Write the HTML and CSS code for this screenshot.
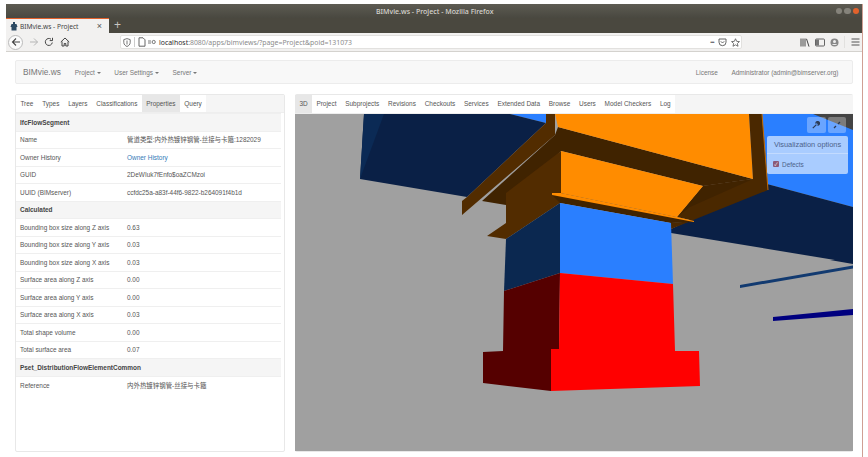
FILE: index.html
```html
<!DOCTYPE html>
<html lang="en">
<head>
    <meta charset="UTF-8">
    <title>BIMvie.ws - Project</title>
    <link rel="stylesheet" href="styles.css">
</head>
<body>
<div class="window">
    <div class="titlebar">
        <span class="title">BIMvie.ws - Project - Mozilla Firefox</span>
        <div class="winbtns"><i></i><i></i><i class="close"></i></div>
    </div>
    <div class="tabstrip">
        <div class="tab">
            <svg class="favicon" width="8" height="9" viewBox="0 0 8 9"><path d="M3 0h2v2h1.500l1 3h-1v3.500H1.500V5h-1l1-3H3z" fill="#2c4a63"/></svg>
            <span class="tab-title">BIMvie.ws - Project</span>
            <span class="tab-close">×</span>
        </div>
        <span class="newtab">+</span>
    </div>
    <div class="toolbar">
        <div class="back">
            <svg width="10" height="10" viewBox="0 0 10 10"><path d="M9 5H1.500M5 1.500L1.500 5 5 8.500" fill="none" stroke="#444" stroke-width="1.100"/></svg>
        </div>
        <svg class="tool forward" width="10" height="10" viewBox="0 0 10 10"><path d="M1 5h7.500M5 1.500L8.500 5 5 8.500" fill="none" stroke="#b5b5b5" stroke-width="1"/></svg>
        <svg class="tool reload" width="10" height="10" viewBox="0 0 10 10"><path d="M8.300 5.500A3.500 3.500 0 1 1 7 2.200M8.500 .8v2.800H5.700" fill="none" stroke="#444" stroke-width="1"/></svg>
        <svg class="tool home" width="10" height="10" viewBox="0 0 10 10"><path d="M.8 5L5 1l4.200 4M2 4.500V9h2.200V6.500h1.600V9H8V4.500" fill="none" stroke="#444" stroke-width="1"/></svg>
        <div class="urlbar">
            <svg width="8" height="9" viewBox="0 0 8 9"><path d="M4 .6l3.200 1v3C7.200 6.500 5.500 7.900 4 8.500 2.500 7.900.8 6.500.8 4.600v-3zM4 2.500v4" fill="none" stroke="#666" stroke-width=".9"/></svg>
            <span class="url-sep"></span>
            <svg width="8" height="10" viewBox="0 0 8 10"><path d="M1 .8h4l2 2v6.400H1z" fill="none" stroke="#555" stroke-width=".9"/></svg>
            <svg class="url-conn" width="8" height="6" viewBox="0 0 8 6"><path d="M0 2h3M0 4h3" stroke="#555" stroke-width=".8"/><circle cx="5.700" cy="3" r="1.600" fill="none" stroke="#555" stroke-width=".8"/></svg>
            <span class="url"><b>localhost</b>:8080/apps/bimviews/?page=Project&amp;poid=131073</span>
            <span class="url-dots">•••</span>
            <svg width="9" height="9" viewBox="0 0 9 9"><path d="M1 1h7v3.200a3.500 3.500 0 0 1-7 0zM2.800 3.300L4.500 5l1.700-1.700" fill="none" stroke="#555" stroke-width=".9"/></svg>
            <svg width="9" height="9" viewBox="0 0 10 10"><path d="M5 .8l1.300 2.900 3.100.3-2.300 2.100.7 3.100L5 7.600 2.200 9.200l.7-3.100L.6 4l3.100-.3z" fill="none" stroke="#555" stroke-width=".9"/></svg>
        </div>
        <div class="tool-right">
            <svg width="10" height="9" viewBox="0 0 10 9"><path d="M1 .5v8M3 .5v8M5 .5v8M6.500 .8l2.500 7.800" fill="none" stroke="#444" stroke-width="1"/></svg>
            <svg width="10" height="9" viewBox="0 0 10 9"><rect x=".5" y="1" width="9" height="7" rx="1" fill="none" stroke="#555" stroke-width=".9"/><rect x="1" y="1.500" width="3" height="6" fill="#777"/></svg>
            <svg width="9" height="9" viewBox="0 0 9 9"><circle cx="4.500" cy="4.500" r="4" fill="#888"/><circle cx="4.500" cy="3.400" r="1.500" fill="#eee"/><path d="M2 7c.6-1.400 4.400-1.400 5 0z" fill="#eee"/></svg>
            <span class="tool-sep"></span>
            <svg width="9" height="8" viewBox="0 0 9 8"><path d="M.5 1h8M.5 4h8M.5 7h8" stroke="#555" stroke-width="1"/></svg>
        </div>
    </div>

    <div class="page">
        <nav class="navbar">
            <span class="brand">BIMvie.ws</span>
            <a class="nav-item">Project<i class="caret"></i></a>
            <a class="nav-item">User Settings<i class="caret"></i></a>
            <a class="nav-item">Server<i class="caret"></i></a>
            <a class="nav-item license">License</a>
            <a class="nav-item">Administrator (admin@bimserver.org)</a>
        </nav>

        <div class="columns">
            <section class="panel left">
                <ul class="tabs">
                    <li>Tree</li>
                    <li>Types</li>
                    <li>Layers</li>
                    <li>Classifications</li>
                    <li class="active">Properties</li>
                    <li>Query</li>
                </ul>
                <table class="props">
                    <colgroup><col class="col-name"><col></colgroup>
                    <tr class="group"><td colspan="2">IfcFlowSegment</td></tr>
                    <tr><td>Name</td><td>管道类型:内外热镀锌钢管-丝接与卡箍:1282029</td></tr>
                    <tr><td>Owner History</td><td><a>Owner History</a></td></tr>
                    <tr><td>GUID</td><td>2DeWIuk7fEnfo$oaZCMzoi</td></tr>
                    <tr><td>UUID (BIMserver)</td><td>ccfdc25a-a83f-44f6-9822-b264091f4b1d</td></tr>
                    <tr class="group"><td colspan="2">Calculated</td></tr>
                    <tr><td>Bounding box size along Z axis</td><td>0.63</td></tr>
                    <tr><td>Bounding box size along Y axis</td><td>0.03</td></tr>
                    <tr><td>Bounding box size along X axis</td><td>0.03</td></tr>
                    <tr><td>Surface area along Z axis</td><td>0.00</td></tr>
                    <tr><td>Surface area along Y axis</td><td>0.00</td></tr>
                    <tr><td>Surface area along X axis</td><td>0.03</td></tr>
                    <tr><td>Total shape volume</td><td>0.00</td></tr>
                    <tr><td>Total surface area</td><td>0.07</td></tr>
                    <tr class="group"><td colspan="2">Pset_DistributionFlowElementCommon</td></tr>
                    <tr><td>Reference</td><td>内外热镀锌钢管-丝接与卡箍</td></tr>
                </table>
            </section>

            <section class="panel right">
                <ul class="tabs">
                    <li class="active">3D</li>
                    <li>Project</li>
                    <li>Subprojects</li>
                    <li>Revisions</li>
                    <li>Checkouts</li>
                    <li>Services</li>
                    <li>Extended Data</li>
                    <li>Browse</li>
                    <li>Users</li>
                    <li>Model Checkers</li>
                    <li>Log</li>
                </ul>
                <div class="viewer">
                    <svg class="scene" viewBox="295 114 558 337" width="558" height="337">
                        <rect x="295" y="114" width="558" height="337" fill="#a0a0a0"/>
                        <polygon points="510,114 546,114 546,123" fill="#2a7fff"/>
                        <polygon points="364,114 510,114 546,123 467,197 360,179" fill="#0a2046"/>
                        <polygon points="364,114 384,114 360,179" fill="#0b2a55"/>
                        <polygon points="762,114 853,114 853,207 767,184" fill="#2a7fff"/>
                        <polygon points="813,114 853,114 853,130" fill="#444"/>
                        <polygon points="671,229 767,184 853,207 853,263 671,233" fill="#0a2046"/>
                        <polygon points="830,260 853,260 853,264" fill="#0a2046"/>
                        <polygon points="740,285 853,265.500 853,268.500 740,288" fill="#123a70"/>
                        <polygon points="773,317 853,309 853,315 773,321" fill="#00007f"/>
                        <polygon points="482,201 555,135 558,127 753,179 703,186 561,151 506,205" fill="#402300"/>
                        <polygon points="546,114 555,114 555,135 462,215 462,201 467,197 546,123" fill="#522c00"/>
                        <polygon points="555,114 749,114 753,179 558,127" fill="#ff8c00"/>
                        <polygon points="749,114 762,114 768,190 671,229 671,223 694,221 677,217 703,186 753,179" fill="#4a2800"/>
                        <polygon points="703,186 753,179 690,207 677,217" fill="#402300"/>
                        <line x1="762" y1="114" x2="768" y2="190" stroke="#c26a00" stroke-width="1"/>
                        <polygon points="506,193 561,151 561,195 560,203 506,239 487,236 506,223" fill="#522c00"/>
                        <polygon points="552,195 561,193 677,217 694,222 671,223 560,203" fill="#402300"/>
                        <polygon points="561,151 703,186 677,217 561,193" fill="#ff8c00"/>
                        <polygon points="552,193 561,193 677,217 694,221 694,222 552,195" fill="#ff8c00"/>
                        <polygon points="560,203 671,223 673,284 560,273" fill="#2a7fff"/>
                        <polygon points="560,203 506,239 504,291 560,273" fill="#0b2850"/>
                        <polygon points="560,273 504,291 503,351 483,352 483,383 551,391 551,349 559,349" fill="#550000"/>
                        <polygon points="560,273 673,284 675,351 699,351 700,386 551,391 551,349 559,349" fill="#ff0000"/>
                    </svg>
                    <div class="viewer-btns">
                        <span class="vbtn">
                            <svg width="8" height="8" viewBox="0 0 8 8"><path d="M.8 7.200l3.600-3.600M4 2.600a1.700 1.700 0 0 1 2.600-1.800L5.400 2l.6.600 1.200-1.200A1.700 1.700 0 0 1 5.400 4" fill="none" stroke="#2b3a55" stroke-width="1.200"/></svg>
                        </span>
                        <span class="vbtn">
                            <svg width="8" height="8" viewBox="0 0 8 8"><path d="M1 7l2-2M5 3l2-2" stroke="#2b3a55" stroke-width="1.300"/></svg>
                        </span>
                    </div>
                    <div class="vis-options">
                        <div class="vis-title">Visualization options</div>
                        <div class="vis-body"><span class="check">✓</span>Defects</div>
                    </div>
                </div>
            </section>
        </div>
    </div>
</div>
</body>
</html>
```

FILE: styles.css
```css
* {
    margin: 0;
    padding: 0;
    box-sizing: border-box;
}

html, body {
    height: 100%;
    overflow: hidden;
}

body {
    background-color: #fff;
    font-family: "Liberation Sans", Arial, "Noto Sans CJK SC", sans-serif;
    font-size: 6.45px;
    color: #333;
}

svg {
    display: block;
    flex: none;
}

.window {
    margin: 4px 0 0 6px;
    width: 857px;
    height: 453px;
    border-right: 1px solid #cf9f94;
}

/* firefox chrome */
.titlebar {
    height: 14px;
    padding-right: 3px;
    display: flex;
    align-items: center;
    justify-content: flex-end;
    position: relative;
    background: linear-gradient(#5d5b52, #494840);
}

.title {
    position: absolute;
    left: 370px;
    top: 3px;
    font-family: "Noto Sans", sans-serif;
    font-size: 7px;
    line-height: 9px;
    font-weight: 500;
    color: #d8d6d0;
}

.winbtns {
    display: flex;
    gap: 2px;
}

.winbtns i {
    width: 6.500px;
    height: 6.500px;
    border-radius: 50%;
    background-color: #85837b;
}

.winbtns .close {
    background-color: #e2622c;
}

.tabstrip {
    height: 15px;
    display: flex;
    background-color: #4a483f;
}

.tab {
    width: 103px;
    display: flex;
    align-items: center;
    padding: 0 7px 0 4px;
    background-color: #f2f1f0;
    border-top: 1px solid #e2622c;
}

.favicon {
    margin-right: 2px;
}

.tab-title {
    flex: 1;
    font-family: "Noto Sans", sans-serif;
    font-size: 6.600px;
    color: #444;
}

.tab-close {
    font-size: 9px;
    color: #555;
}

.newtab {
    margin-left: 1px;
    padding: 0 4px;
    font-size: 12px;
    line-height: 14px;
    color: #c8c6c0;
}

.toolbar {
    height: 19px;
    display: flex;
    align-items: center;
    padding-left: 2px;
    background-color: #f2f1f0;
    border-bottom: 1px solid #d4d2ce;
}

.back {
    width: 15px;
    height: 15px;
    display: flex;
    align-items: center;
    justify-content: center;
    background-color: #fbfbfb;
    border: 1px solid #bbb;
    border-radius: 50%;
}

.forward {
    margin-left: 6px;
}

.reload {
    margin-left: 5px;
}

.home {
    margin-left: 6px;
}

.urlbar {
    width: 622px;
    height: 14px;
    margin-left: 50px;
    display: flex;
    align-items: center;
    padding: 0 1px 0 2px;
    background-color: #fff;
    border: 1px solid #e2e1df;
    border-radius: 2px;
}

.url-sep {
    width: 1px;
    height: 10px;
    margin: 0 3px;
    background-color: #ccc;
}

.url-conn {
    margin-left: 2px;
}

.url {
    flex: 1;
    margin-left: 3px;
    font-family: "Noto Sans", sans-serif;
    font-size: 6.900px;
    color: #8b8b8b;
}

.url b {
    font-weight: 400;
    color: #2a2a2a;
}

.url-dots {
    margin-right: 4px;
    font-size: 5px;
    letter-spacing: -.5px;
    color: #555;
}

.urlbar .url-dots + svg {
    margin-right: 4px;
}

.tool-right {
    display: flex;
    align-items: center;
    gap: 5px;
    margin-left: 58px;
}

.tool-sep {
    width: 1px;
    height: 12px;
    margin: 0 1px 0 0;
    background-color: #e2e1df;
}

/* page */
.page {
    padding: 8px 9px 0;
}

.navbar {
    height: 24px;
    display: flex;
    align-items: center;
    padding-left: 7px;
    background-color: #f8f8f8;
    border: 1px solid #ececec;
    border-radius: 2px;
}

.brand {
    margin-right: 14px;
    font-size: 8.300px;
    color: #777;
}

.nav-item {
    margin-right: 13.500px;
    color: #777;
}

.license {
    margin-left: auto;
}

.caret {
    display: inline-block;
    margin-left: 2px;
    vertical-align: middle;
    border-top: 2px solid #777;
    border-left: 2px solid transparent;
    border-right: 2px solid transparent;
}

.columns {
    display: flex;
    gap: 10px;
    margin-top: 10px;
}

.panel {
    height: 358px;
    background-color: #fff;
    border: 1px solid #e8e8e8;
    border-radius: 2px;
}

.left {
    width: 270px;
}

.right {
    width: 558px;
    display: flex;
    flex-direction: column;
    border-left: none;
    border-right: none;
}

.tabs {
    height: 19px;
    flex: none;
    display: flex;
    list-style: none;
    background-color: #f5f5f5;
    border-bottom: 1px solid #eee;
}

.left .tabs {
    height: 18px;
}

.tabs li {
    padding: 0 4.400px;
    line-height: 18px;
    background-color: #fff;
    color: #555;
}

.tabs .active {
    background-color: #e7e7e7;
}

.props {
    width: 265px;
    table-layout: fixed;
    border-collapse: collapse;
}

.col-name {
    width: 107px;
}

.props td {
    height: 17.500px;
    padding: 0 4px;
    border-top: 1px solid #efefef;
    color: #555;
    white-space: nowrap;
}

.props a {
    color: #337ab7;
}

.props .group td {
    background-color: #f5f5f5;
    font-weight: bold;
    color: #444;
}

/* 3d viewer */
.viewer {
    flex: 1;
    position: relative;
    overflow: hidden;
}

.scene {
    width: 100%;
}

.viewer-btns {
    position: absolute;
    top: 3px;
    right: 7px;
    display: flex;
    gap: 2px;
}

.vbtn {
    width: 18.500px;
    height: 16px;
    display: flex;
    align-items: center;
    justify-content: center;
    background-color: rgba(255, 255, 255, .3);
    border-radius: 2px;
}

.vis-options {
    position: absolute;
    top: 22px;
    right: 5px;
    width: 81px;
    background-color: rgba(255, 255, 255, .6);
    border-radius: 2px;
    color: #4c628a;
}

.vis-title {
    height: 18px;
    text-align: center;
    font-size: 7.400px;
    line-height: 18px;
    border-bottom: 1px solid rgba(255, 255, 255, .3);
}

.vis-body {
    height: 20px;
    display: flex;
    align-items: center;
    padding-left: 6px;
}

.check {
    width: 6px;
    height: 6px;
    margin-right: 3px;
    background-color: #8a5a78;
    border-radius: 1px;
    font-size: 5px;
    line-height: 6px;
    text-align: center;
    color: #fff;
}
```
